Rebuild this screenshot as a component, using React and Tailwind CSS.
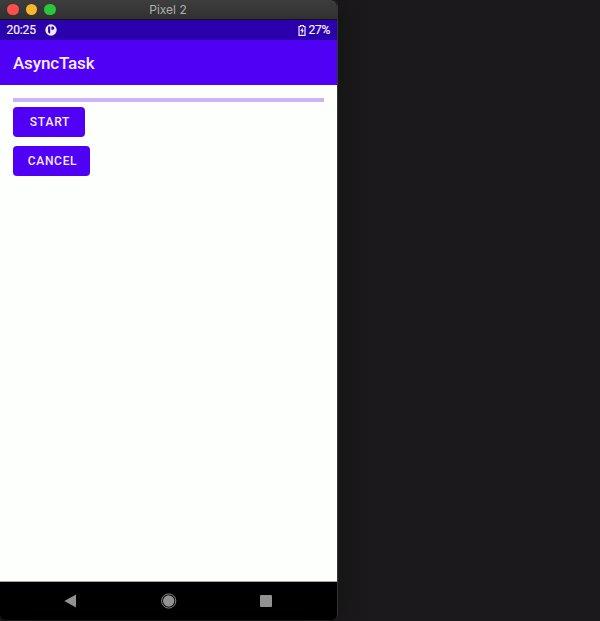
function TitleBar() {
  return (
    <header className="grid h-5 shrink-0 grid-cols-[1fr_auto_1fr] items-center rounded-tr-md border-b border-[#111111] bg-linear-to-b from-[#3e3d3d] to-[#323131]">
      <div className="flex gap-[7px] pl-[7px]">
        <span className="size-[11.5px] rounded-full bg-[#fc4f49]" />
        <span className="size-[11.5px] rounded-full bg-[#fdb52b]" />
        <span className="size-[11.5px] rounded-full bg-[#2bc63b]" />
      </div>
      <h1 className="pt-px pr-px font-[Inter,sans-serif] text-[12px] leading-none text-[#b0aeae]">Pixel 2</h1>
    </header>
  );
}

function StatusBar() {
  return (
    <div className="flex h-5 shrink-0 items-center bg-[#2b00ad] pr-[7px] pl-[6.5px] text-[12px] leading-none text-[#f6f0ff]">
      <span className="tracking-[-0.1px] [-webkit-text-stroke:0.2px_currentColor]">20:25</span>
      <svg className="ml-[9.5px] size-3" viewBox="0 0 12 12">
        <circle cx="6" cy="6" r="5.7" fill="#f1eaff" />
        <path d="M3.1 2.4h2.1v7.2H4.4L3.1 8.3zM6.4 2.4h1.4q1.5 0 1.5 1.7T7.8 5.8H6.4z" fill="#2b00ad" />
      </svg>
      <svg className="ml-auto h-[11px] w-2" viewBox="0 0 8 11">
        <path d="M2.6 1.5V.5h2.8v1h1.6v8.9H1V1.5z" fill="none" stroke="#f1eaff" strokeWidth="1.2" />
        <path d="M4.7 2.6 2.2 6h1.5v3l2.3-3.7H4.7z" fill="#f1eaff" />
      </svg>
      <span className="ml-[3px] tracking-[-0.3px] [-webkit-text-stroke:0.2px_currentColor]">27%</span>
    </div>
  );
}

function NavigationBar() {
  return (
    <nav className="flex h-[38px] shrink-0 items-center justify-between bg-black pr-[65px] pl-[63px]">
      <svg className="h-[14px] w-[14px]" viewBox="0 0 14 14">
        <path d="M13 .6v13L1.3 7.1z" fill="#929292" />
      </svg>
      <svg className="size-4" viewBox="0 0 16 16">
        <circle cx="7.7" cy="8" r="7.1" fill="none" stroke="#858585" strokeWidth="1" />
        <circle cx="7.7" cy="8" r="5.7" fill="#929292" />
      </svg>
      <span className="size-3 rounded-[1px] bg-[#929292]" />
    </nav>
  );
}

export default function App() {
  return (
    <div className="h-[621px] w-[600px] overflow-hidden bg-[#1b191b] font-[Roboto,sans-serif]">
      <div className="flex h-[620px] w-[338px] flex-col overflow-hidden rounded-tr-md rounded-b-md border-r border-[#353335] bg-black shadow-[2px_0_24px_#131413]">
        <TitleBar />
        <StatusBar />
        <div className="flex h-[45px] shrink-0 items-center bg-[#5000f4] pt-[3px] pl-[13px] text-[17px] font-medium tracking-[-0.15px] text-[#f4edff]">
          AsyncTask
        </div>
        <main className="flex flex-1 flex-col items-start border-b border-[#a4aaa9] bg-[#fdfffc] px-[13px] pt-[13px]">
          <div className="h-1 w-full bg-[#cbb3f6]" />
          <button className="mt-[5px] h-[30px] w-[72px] rounded-[4px] bg-[#5000f4] pl-[2px] text-[12px] leading-none font-medium tracking-[0.8px] text-[#f4edff]">
            START
          </button>
          <button className="mt-[9px] h-[30px] w-[77px] rounded-[4px] bg-[#5000f4] pl-[2px] text-[12px] leading-none font-medium tracking-[0.7px] text-[#f4edff]">
            CANCEL
          </button>
        </main>
        <NavigationBar />
      </div>
    </div>
  );
}
